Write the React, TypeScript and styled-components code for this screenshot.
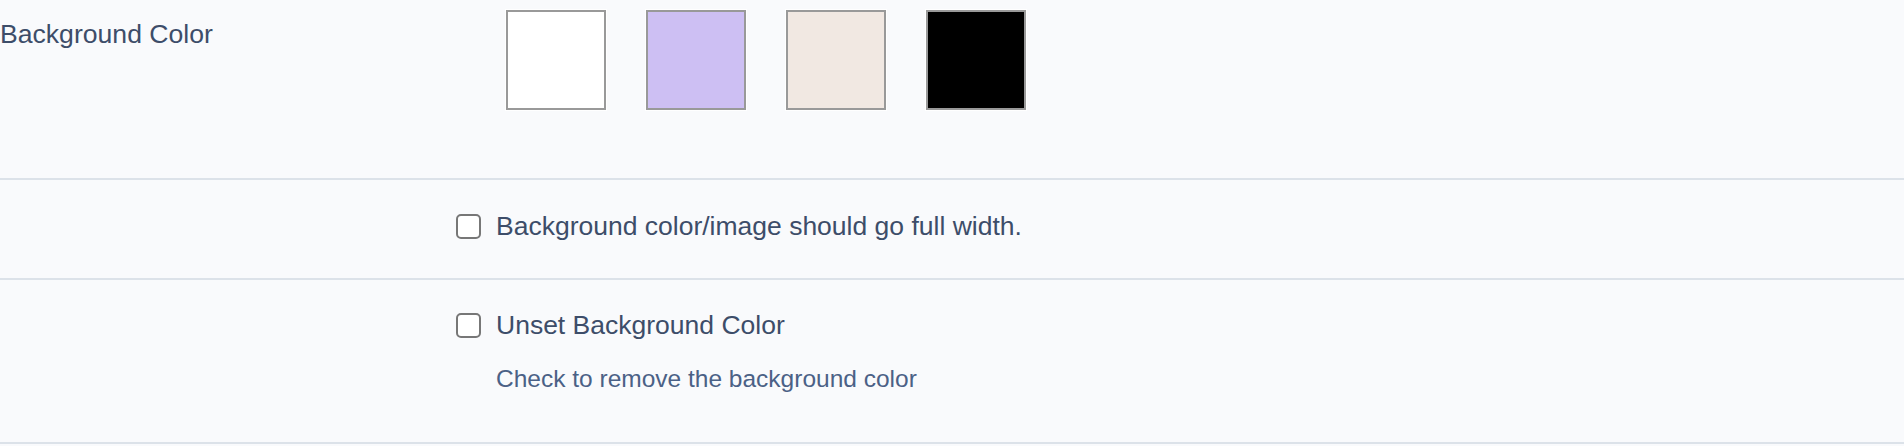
import React from 'react'
import styled, { createGlobalStyle } from 'styled-components'

const GlobalStyle = createGlobalStyle`
  html, body {
    margin: 0;
    padding: 0;
    background-color: #f9fafc;
  }
  body {
    font-family: 'Liberation Sans', Arial, Helvetica, sans-serif;
    color: #3d4d69;
  }
`

const Panel = styled.div`
  width: 100%;
  background-color: #f9fafc;
`

const Row = styled.div<{ $top: number; $bottom: number }>`
  display: grid;
  grid-template-columns: 456px 1fr;
  padding: ${({ $top }) => $top}px 0 ${({ $bottom }) => $bottom}px;
  border-bottom: 2px solid #dce2e9;
`

const Label = styled.div`
  font-size: 26.6px;
  line-height: 30px;
  padding-top: 9px;
  color: #3d4d69;
`

const SwatchList = styled.div`
  display: flex;
  gap: 40px;
  margin-left: 50px;
`

const Swatch = styled.button<{ $color: string }>`
  width: 100px;
  height: 100px;
  padding: 0;
  box-sizing: border-box;
  border: 2px solid #999999;
  background-color: ${({ $color }) => $color};
  box-shadow: 0 0 0 1px #ffffff;
  cursor: pointer;
`

const CheckLine = styled.label`
  display: flex;
  align-items: center;
  gap: 15px;
  height: 30px;
  font-size: 26.5px;
  line-height: 30px;
  color: #3d4d69;
  cursor: pointer;
`

const Box = styled.input`
  appearance: none;
  margin: 0;
  width: 25px;
  height: 25px;
  box-sizing: border-box;
  border: 2px solid #777777;
  border-radius: 5px;
  background-color: #ffffff;
  flex-shrink: 0;
`

const Help = styled.div`
  margin: 25px 0 0 40px;
  font-size: 24.5px;
  line-height: 28px;
  color: #4b6186;
`

const swatches = ['#ffffff', '#cdbff3', '#f1e8e2', '#000000']

const App: React.FC = () => {
  return (
    <Panel>
      <GlobalStyle />
      <Row $top={10} $bottom={68}>
        <Label>Background Color</Label>
        <SwatchList>
          {swatches.map((color) => (
            <Swatch key={color} $color={color} aria-label={color} />
          ))}
        </SwatchList>
      </Row>
      <Row $top={31} $bottom={37}>
        <div />
        <CheckLine>
          <Box type="checkbox" />
          Background color/image should go full width.
        </CheckLine>
      </Row>
      <Row $top={30} $bottom={49}>
        <div />
        <div>
          <CheckLine>
            <Box type="checkbox" />
            Unset Background Color
          </CheckLine>
          <Help>Check to remove the background color</Help>
        </div>
      </Row>
    </Panel>
  )
}

export default App
